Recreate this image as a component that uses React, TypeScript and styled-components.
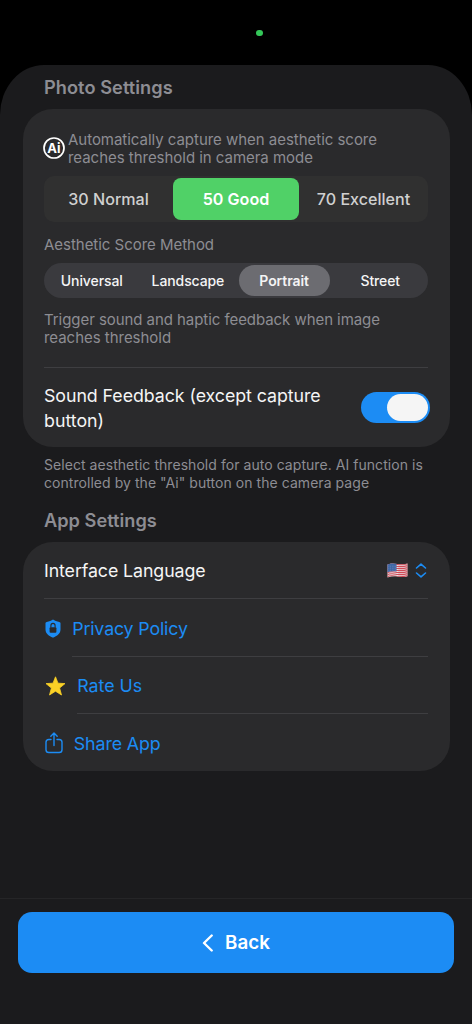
import React, { useState } from "react";
import styled, { createGlobalStyle } from "styled-components";

const blue = "#1c8cf4";
const gray = "#8d8d93";

const GlobalStyle = createGlobalStyle`
  * { box-sizing: border-box; }
  body { margin: 0; background: #000; font-family: Inter, "Liberation Sans", sans-serif; }
  button { font-family: inherit; border: 0; padding: 0; cursor: pointer; }
`;

const Screen = styled.div`
  width: 472px;
  height: 1024px;
  display: flex;
  flex-direction: column;
  background: #000;
  overflow: hidden;
`;

const StatusBar = styled.div`
  height: 65px;
  flex: none;
  display: flex;
  justify-content: center;
  padding: 29.5px 0 0 47px;
`;

const CameraDot = styled.span`
  width: 6.6px;
  height: 6.6px;
  border-radius: 50%;
  background: #34c759;
`;

const Sheet = styled.main`
  flex: 1;
  display: flex;
  flex-direction: column;
  background: #1b1b1d;
  border-radius: 44px 44px 0 0 / 50px 50px 0 0;
`;

const Content = styled.div`
  height: 833px;
  padding: 0 22.5px;
`;

const Line = styled.span<{ $track?: number }>`
  display: block;
  white-space: nowrap;
  letter-spacing: ${(p) => p.$track ?? 0}px;
`;

const SectionTitle = styled.h2<{ $height: number }>`
  margin: 0;
  padding-left: 21.5px;
  height: ${(p) => p.$height}px;
  line-height: 44.5px;
  font-size: 18.2px;
  font-weight: 600;
  color: ${gray};
`;

const Card = styled.section<{ $height: number }>`
  height: ${(p) => p.$height}px;
  padding: 0 21.5px;
  border-radius: 30px;
  background: #2a2a2c;
`;

const Caption = styled.div`
  font-size: 15px;
  line-height: 18.8px;
  color: ${gray};
`;

const CaptureHint = styled.div`
  display: flex;
  padding-top: 21.3px;
  height: 66.5px;
  gap: 3px;
  svg { flex: none; margin: 6.7px 0 0 -1px; }
`;

const Thresholds = styled.div`
  display: flex;
  height: 46px;
  padding: 2px;
  gap: 2.4px;
  border-radius: 10px;
  background: #303030;
`;

const Threshold = styled.button<{ $on: boolean }>`
  flex: 1;
  border-radius: 8px;
  background: ${(p) => (p.$on ? "#50d167" : "transparent")};
  color: ${(p) => (p.$on ? "#fff" : "#d0d0d0")};
  font-size: 16.1px;
  font-weight: ${(p) => (p.$on ? 600 : 500)};
`;

const MethodLabel = styled(Caption)`
  padding-top: 14.2px;
  height: 41px;
`;

const Methods = styled.div`
  display: flex;
  height: 35px;
  padding: 2.2px;
  gap: 5px;
  border-radius: 18px;
  background: #3a3a3e;
`;

const Method = styled.button<{ $on: boolean }>`
  flex: 1;
  border-radius: 16px;
  background: ${(p) => (p.$on ? "#6c6c71" : "transparent")};
  color: #f4f4f5;
  font-size: 14px;
  font-weight: ${(p) => (p.$on ? 600 : 500)};
`;

const FeedbackHint = styled(Caption)`
  padding-top: 12.8px;
  height: 69px;
`;

const Divider = styled.hr<{ $inset?: number }>`
  margin: 0 0 0 ${(p) => p.$inset ?? 0}px;
  border: 0;
  height: 1px;
  background: #3e3e41;
`;

const SoundRow = styled.div`
  display: flex;
  justify-content: space-between;
  margin-right: -2px;
  padding-top: 16px;
  font-size: 17.8px;
  line-height: 24.9px;
  color: #f5f5f5;
`;

const Toggle = styled.button<{ $on: boolean }>`
  display: flex;
  justify-content: ${(p) => (p.$on ? "flex-end" : "flex-start")};
  width: 69px;
  height: 31px;
  margin-top: 8.5px;
  padding: 2px;
  border-radius: 16px;
  background: ${(p) => (p.$on ? blue : "#3a3a3e")};
`;

const Thumb = styled.span`
  width: 41px;
  height: 27px;
  border-radius: 14px;
  background: #f5f5f5;
`;

const Footnote = styled.p`
  margin: 0;
  padding: 9px 0 0 21.5px;
  height: 51.1px;
  font-size: 14px;
  line-height: 18px;
  color: ${gray};
`;

const Row = styled.div<{ $link?: boolean; $gap?: number }>`
  display: flex;
  align-items: center;
  height: 56.4px;
  padding: ${(p) => (p.$link ? "1.2px 0 0 1.2px" : "0")};
  gap: ${(p) => p.$gap ?? 0}px;
  font-size: 17.8px;
  color: ${(p) => (p.$link ? blue : "#f5f5f5")};
  svg { flex: none; }
`;

const Picker = styled.div`
  display: flex;
  align-items: center;
  margin-left: auto;
  margin-right: 1px;
  gap: 7px;
`;

const Footer = styled.footer`
  flex: 1;
  padding: 12.8px 18px 0;
  border-top: 1px solid #252527;
  background: #1b1b1d;
`;

const BackButton = styled.button`
  display: flex;
  align-items: center;
  justify-content: center;
  gap: 11px;
  width: 100%;
  height: 61.5px;
  padding-top: 0.8px;
  border-radius: 14px;
  background: ${blue};
  color: #fff;
  font-size: 18.8px;
  font-weight: 600;
`;

const AiBadge = () => (
  <svg width="22" height="22" viewBox="0 0 22 22">
    <circle cx="11" cy="11" r="10" fill="none" stroke="#fff" strokeWidth="1.7" />
    <text x="11" y="15.6" textAnchor="middle" fill="#fff" fontSize="13" fontWeight="700" fontFamily="Inter, sans-serif">Ai</text>
  </svg>
);

const Flag = () => (
  <svg width="21" height="15" viewBox="0 0 21 15">
    <defs>
      <clipPath id="wave">
        <path d="M.5 1.6C4-.2 7 .4 10.500 1S17 1.300 20.500.4V13.200C17 14.500 14 14 10.500 13.500S4 13.400.5 14.600Z" />
      </clipPath>
    </defs>
    <g clipPath="url(#wave)">
      <rect width="21" height="15" fill="#e9dfe1" />
      <g fill="none" stroke="#cf4a58" strokeWidth="1.05">
        {[0, 1, 2, 3, 4, 5, 6].map((i) => (
          <path key={i} d={`M0 ${1.7 + i * 2}C4 ${i * 2} 7 ${0.9 + i * 2} 10.500 ${1.4 + i * 2}S17 ${1.600 + i * 2} 21 ${0.6 + i * 2}`} />
        ))}
      </g>
      <path d="M0 0H9.500V8.500C6 7.900 3 8.200 0 9.300Z" fill="#3f67a6" />
      <path d="M1.500 3.200H9M1.500 5.200H9M1.500 7.200H9" stroke="#7e9bc8" strokeWidth=".7" strokeDasharray=".7 1" />
    </g>
  </svg>
);

const UpDown = () => (
  <svg width="12" height="15" viewBox="0 0 12 15" fill="none" stroke={blue} strokeWidth="1.6" strokeLinecap="round" strokeLinejoin="round">
    <path d="M1.500 5L6 1.100L10.500 5M1.500 10L6 13.900L10.500 10" />
  </svg>
);

const Shield = () => (
  <svg width="16" height="19" viewBox="0 0 16 19">
    <path d="M8 .5C9.500 1.700 12 2.600 14.300 3C15 3.100 15.500 3.600 15.500 4.300V10.500C15.500 14.300 12.500 16.900 8.600 18.400Q8 18.600 7.400 18.400C3.500 16.900.5 14.300.5 10.500V4.300C.5 3.600 1 3.100 1.700 3C4 2.600 6.500 1.700 8 .5Z" fill={blue} />
    <rect x="4.600" y="8.300" width="6.800" height="5.400" rx="1" fill="#2a2a2c" />
    <path d="M5.900 8.500V6.700A2.100 2.300 0 0 1 10.100 6.700V8.500" fill="none" stroke="#2a2a2c" strokeWidth="1.100" />
  </svg>
);

const Star = () => (
  <svg width="21" height="20" viewBox="0 0 21 20">
    <path d="M10.500.8L13 7.200L20 7.600L14.600 12L16.500 19L10.500 15.200L4.500 19L6.400 12L1 7.600L8 7.200Z" fill="#fad126" stroke="#fad126" strokeWidth=".8" strokeLinejoin="round" />
  </svg>
);

const Share = () => (
  <svg width="18" height="22" viewBox="0 0 18 22" fill="none" stroke={blue} strokeWidth="1.400" strokeLinecap="round" strokeLinejoin="round">
    <path d="M6 7.500H3.800Q1 7.500 1 10.300V17.700Q1 20.500 3.800 20.500H14.200Q17 20.500 17 17.700V10.300Q17 7.500 14.200 7.500H12M9 13.500V1.200M5.800 4.200L9 1L12.200 4.200" />
  </svg>
);

const Chevron = () => (
  <svg width="12" height="18" viewBox="0 0 12 18" fill="none" stroke="#fff" strokeWidth="2.400" strokeLinecap="round" strokeLinejoin="round">
    <path d="M9.700 1.500L2 9L9.700 16.500" />
  </svg>
);

export default function App() {
  const [threshold, setThreshold] = useState("50 Good");
  const [method, setMethod] = useState("Portrait");
  const [sound, setSound] = useState(true);

  return (
    <>
      <GlobalStyle />
      <Screen>
        <StatusBar><CameraDot /></StatusBar>
        <Sheet>
          <Content>
            <SectionTitle $height={44.3}><Line $track={0.06}>Photo Settings</Line></SectionTitle>
            <Card $height={337.5}>
              <CaptureHint>
                <AiBadge />
                <Caption>
                  <Line $track={-0.03}>Automatically capture when aesthetic score</Line>
                  <Line $track={-0.03}>reaches threshold in camera mode</Line>
                </Caption>
              </CaptureHint>
              <Thresholds>
                {["30 Normal", "50 Good", "70 Excellent"].map((t) => (
                  <Threshold key={t} $on={t === threshold} onClick={() => setThreshold(t)}><Line>{t}</Line></Threshold>
                ))}
              </Thresholds>
              <MethodLabel><Line $track={-0.03}>Aesthetic Score Method</Line></MethodLabel>
              <Methods>
                {["Universal", "Landscape", "Portrait", "Street"].map((m) => (
                  <Method key={m} $on={m === method} onClick={() => setMethod(m)}><Line $track={-0.1}>{m}</Line></Method>
                ))}
              </Methods>
              <FeedbackHint>
                <Line $track={-0.06}>Trigger sound and haptic feedback when image</Line>
                <Line $track={-0.03}>reaches threshold</Line>
              </FeedbackHint>
              <Divider />
              <SoundRow>
                <div>
                  <Line $track={-0.06}>Sound Feedback (except capture</Line>
                  <Line>button)</Line>
                </div>
                <Toggle $on={sound} aria-label="Sound Feedback" onClick={() => setSound(!sound)}><Thumb /></Toggle>
              </SoundRow>
            </Card>
            <Footnote>
              <Line $track={0.05}>Select aesthetic threshold for auto capture. AI function is</Line>
              <Line $track={0.05}>controlled by the "Ai" button on the camera page</Line>
            </Footnote>
            <SectionTitle $height={44.2}><Line $track={0.02}>App Settings</Line></SectionTitle>
            <Card $height={229}>
              <Row>
                <Line $track={-0.1}>Interface Language</Line>
                <Picker><Flag /><UpDown /></Picker>
              </Row>
              <Divider />
              <Row $link $gap={11}><Shield /><Line $track={-0.15}>Privacy Policy</Line></Row>
              <Divider $inset={28} />
              <Row $link $gap={11}><Star /><Line>Rate Us</Line></Row>
              <Divider $inset={33} />
              <Row $link $gap={10.6}><Share /><Line $track={-0.1}>Share App</Line></Row>
            </Card>
          </Content>
          <Footer>
            <BackButton><Chevron /><Line>Back</Line></BackButton>
          </Footer>
        </Sheet>
      </Screen>
    </>
  );
}
